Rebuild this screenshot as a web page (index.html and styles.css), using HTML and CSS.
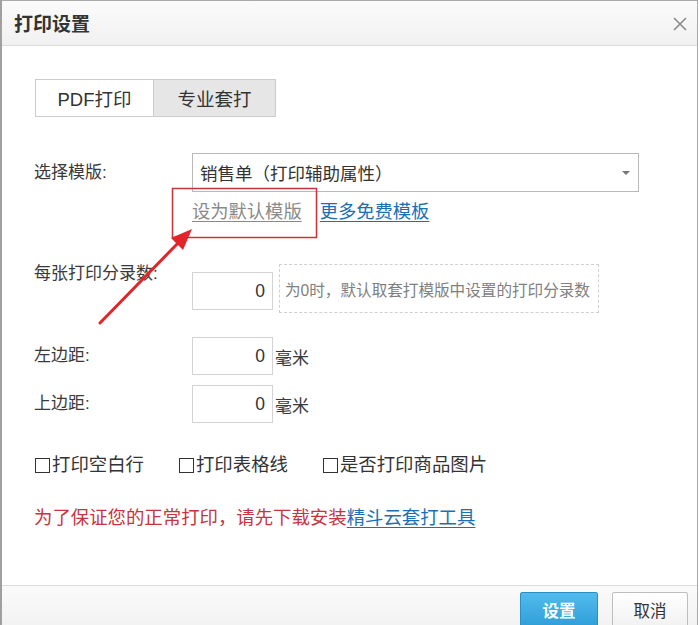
FILE: index.html
```html
<!DOCTYPE html>
<html lang="zh-CN">
<head>
<meta charset="utf-8">
<title>打印设置</title>
<link rel="stylesheet" href="styles.css">
</head>
<body>
<div class="dialog">
  <div class="header">
    <span class="title">打印设置</span>
    <span class="close"><svg width="14" height="14" viewBox="0 0 14 14"><path d="M1 1L13 13M13 1L1 13" stroke="#8a8a8a" stroke-width="1.6" fill="none"/></svg></span>
  </div>
  <div class="body">
    <div class="tabs">
      <div class="tab">PDF打印</div>
      <div class="tab active">专业套打</div>
    </div>
    <div class="row row-center row-select">
      <span class="label">选择模版:</span>
      <div class="select"><span class="select-text">销售单（打印辅助属性）</span><span class="caret"></span></div>
    </div>
    <div class="links">
      <a class="link link-gray">设为默认模版</a><a class="link link-blue">更多免费模板</a>
    </div>
    <div class="row row-top row-count">
      <span class="label">每张打印分录数:</span>
      <div class="input input-offset">0</div>
      <div class="hint">为0时，默认取套打模版中设置的打印分录数</div>
    </div>
    <div class="row row-center row-left">
      <span class="label">左边距:</span>
      <div class="input">0</div><span class="unit">毫米</span>
    </div>
    <div class="row row-center row-topm">
      <span class="label">上边距:</span>
      <div class="input">0</div><span class="unit">毫米</span>
    </div>
    <div class="checks">
      <span class="check"><span class="box"></span>打印空白行</span>
      <span class="check"><span class="box"></span>打印表格线</span>
      <span class="check"><span class="box"></span>是否打印商品图片</span>
    </div>
    <div class="notice">为了保证您的正常打印，请先下载安装<a class="notice-link">精斗云套打工具</a></div>
  </div>
  <div class="footer">
    <button class="btn btn-primary">设置</button>
    <button class="btn btn-default">取消</button>
  </div>
  <svg class="annot" width="700" height="625" viewBox="0 0 700 625">
    <rect x="172.5" y="188.5" width="144" height="49" fill="none" stroke="#c8333b" stroke-width="1.5"/>
    <line x1="100" y1="323" x2="180" y2="241" stroke="#e0262a" stroke-width="3" stroke-linecap="round"/>
    <polygon points="192,229 171,238 183,250" fill="#e0262a"/>
  </svg>
</div>
</body>
</html>
```

FILE: styles.css
```css
html, body {
  margin: 0;
  padding: 0;
  background: #ffffff;
}

body {
  width: 700px;
  height: 625px;
  overflow: hidden;
  font-family: "Liberation Sans", "Noto Sans CJK SC", sans-serif;
  color: #333333;
}

.dialog {
  position: relative;
  width: 698px;
  box-sizing: border-box;
  border: 1px solid #a9a9a9;
  border-left: 2px solid #a0a0a0;
  background: #ffffff;
}

.header {
  height: 44px;
  border-bottom: 1px solid #dcdcdc;
  background: linear-gradient(#fbfbfb, #f1f1f1);
  display: flex;
  align-items: center;
  justify-content: space-between;
  padding: 0 10px 0 12px;
}

.title {
  font-size: 19px;
  font-weight: bold;
  color: #333333;
  line-height: 24px;
  font-family: "Noto Sans CJK SC", sans-serif;
}

.close {
  display: flex;
  width: 14px;
  height: 14px;
  margin-top: 2px;
}

.body {
  padding: 33px 0 55px 32px;
}

.tabs {
  display: flex;
  width: max-content;
  border: 1px solid #cccccc;
  height: 38px;
  box-sizing: border-box;
  margin-left: 1px;
}

.tab {
  display: flex;
  align-items: center;
  justify-content: center;
  font-size: 18.5px;
  color: #333333;
  background: #ffffff;
  width: 117px;
}

.tab.active {
  width: 121px;
  background: #e6e6e6;
  border-left: 1px solid #cccccc;
}

.row {
  display: flex;
}

.row-center {
  align-items: center;
}

.row-top {
  align-items: flex-start;
}

.label {
  width: 158px;
  flex: none;
  font-size: 17px;
  line-height: 18px;
  color: #3a3a3a;
}

.row-select {
  margin-top: 36px;
}

.select {
  width: 447px;
  height: 39px;
  box-sizing: border-box;
  border: 1px solid #b9b9b9;
  display: flex;
  align-items: center;
  justify-content: space-between;
  padding: 0 8px 0 7px;
}

.select-text {
  font-size: 17.5px;
  color: #333333;
}

.caret {
  width: 0;
  height: 0;
  border-left: 4px solid transparent;
  border-right: 4px solid transparent;
  border-top: 4px solid #777777;
  margin-right: 0;
}

.links {
  margin-top: 8px;
  padding-left: 158px;
  line-height: 24px;
  font-size: 18.3px;
  display: flex;
  gap: 18px;
}

.link {
  text-decoration: underline;
  text-underline-offset: 3px;
}

.link-gray {
  color: #8a8a8a;
}

.link-blue {
  color: #1d6fb3;
}

.row-count {
  margin-top: 40px;
}

.row-count .label {
  margin-top: 1px;
}

.input {
  width: 81px;
  height: 38px;
  box-sizing: border-box;
  border: 1px solid #d3d3d3;
  display: flex;
  align-items: center;
  justify-content: flex-end;
  padding-right: 7px;
  font-size: 17.5px;
  color: #333333;
}

.input-offset {
  margin-top: 8px;
}

.hint {
  margin-left: 6px;
  width: 320px;
  height: 49px;
  box-sizing: border-box;
  border: 1px dashed #d0d0d0;
  display: flex;
  align-items: center;
  padding-left: 5px;
  font-size: 15.6px;
  color: #808080;
  white-space: nowrap;
}

.unit {
  margin-left: 2px;
  font-size: 17px;
  color: #3a3a3a;
}

.row-left {
  margin-top: 24px;
}

.row-topm {
  margin-top: 10px;
}

.checks {
  margin-top: 30px;
  display: flex;
  gap: 34px;
  line-height: 24px;
  font-size: 18.4px;
  color: #333333;
}

.check {
  display: flex;
  align-items: center;
}

.box {
  width: 15px;
  height: 15px;
  box-sizing: border-box;
  border: 1.5px solid #333333;
  margin: 0 2px 0 1px;
}

.notice {
  margin-top: 29px;
  line-height: 24px;
  font-size: 18.4px;
  color: #c6343d;
}

.notice-link {
  color: #1d6fb3;
  text-decoration: underline;
  text-underline-offset: 3px;
}

.footer {
  border-top: 1px solid #dddddd;
  background: linear-gradient(#fafafa, #f0f0f0);
  display: flex;
  justify-content: flex-end;
  gap: 14px;
  padding: 6px 9px 12px 0;
}

.btn {
  height: 36px;
  font-family: "Noto Sans CJK SC", sans-serif;
  font-size: 16.5px;
  border-radius: 2px;
  padding: 0;
}

.btn-primary {
  width: 78px;
  color: #ffffff;
  font-weight: bold;
  background: linear-gradient(#52bbed, #2f9ed8);
  border: 1px solid #2b8fc6;
}

.btn-default {
  width: 76px;
  color: #333333;
  background: linear-gradient(#ffffff, #f1f1f1);
  border: 1px solid #bdbdbd;
}

.annot {
  position: absolute;
  left: -2px;
  top: -1px;
  pointer-events: none;
}
```
